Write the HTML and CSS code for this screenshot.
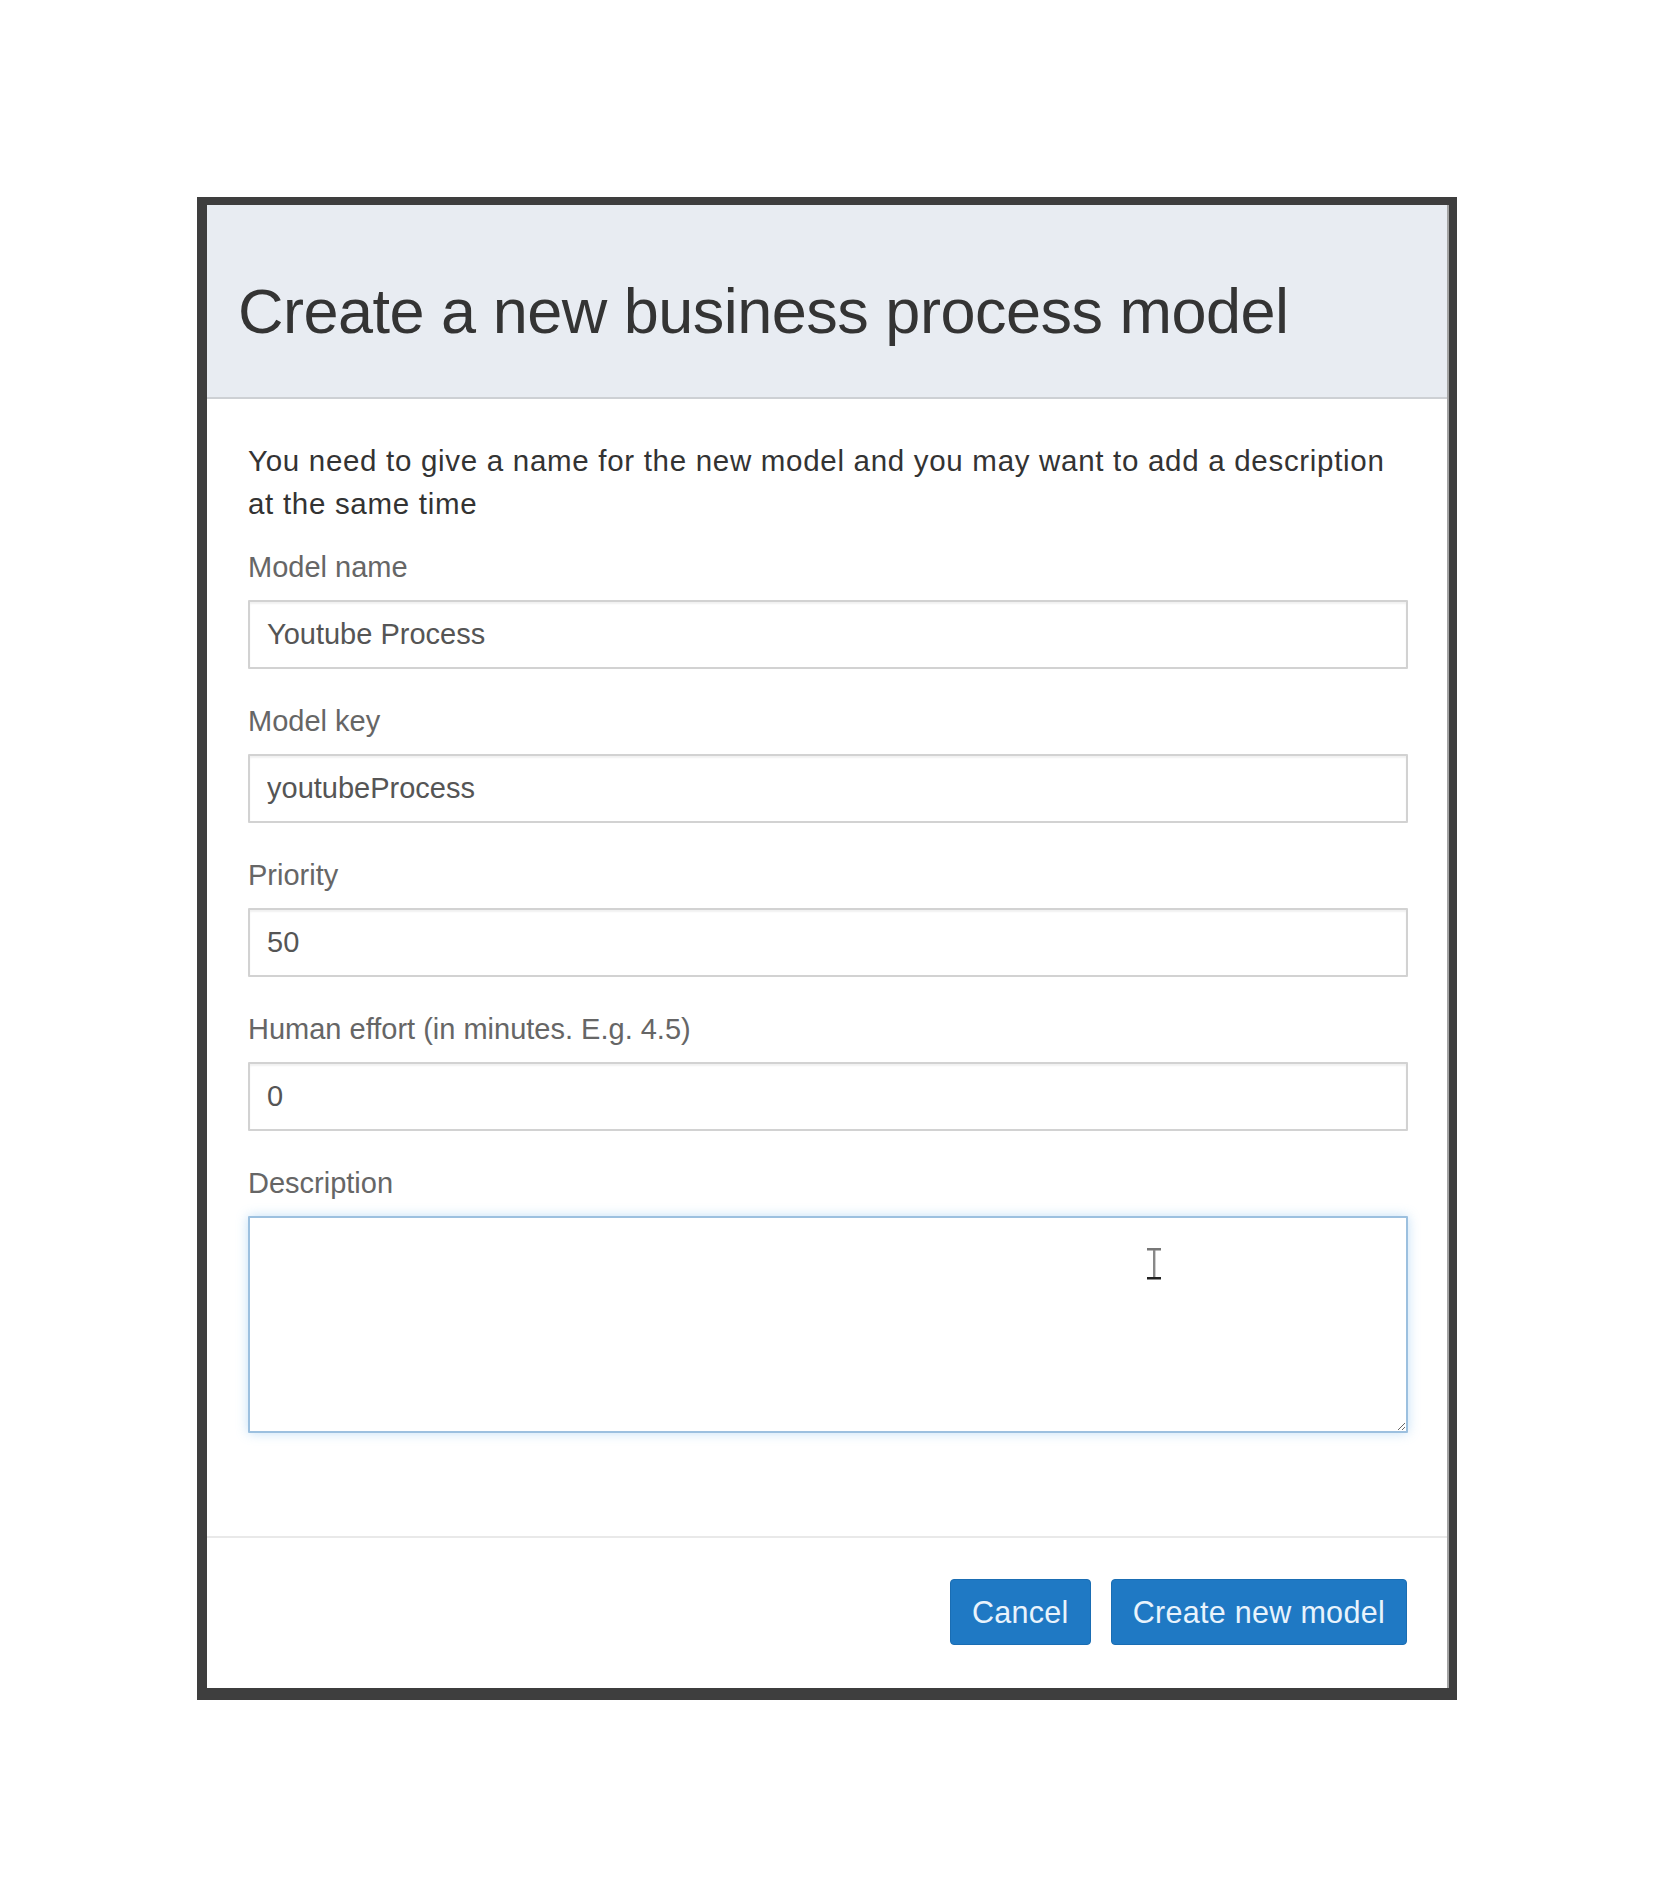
FILE: index.html
```html
<!DOCTYPE html>
<html>
<head>
<meta charset="utf-8">
<link rel="stylesheet" href="styles.css">
</head>
<body>
<div class="page">
  <div class="frame">
    <div class="modal">
      <div class="modal-header">
        <h1 class="modal-title">Create a new business process model</h1>
      </div>
      <div class="modal-body">
        <p class="intro">You need to give a name for the new model and you may want to add a description at the same time</p>
        <div class="form-group">
          <label class="label">Model name</label>
          <input class="input" type="text" value="Youtube Process">
        </div>
        <div class="form-group">
          <label class="label">Model key</label>
          <input class="input" type="text" value="youtubeProcess">
        </div>
        <div class="form-group">
          <label class="label">Priority</label>
          <input class="input" type="text" value="50">
        </div>
        <div class="form-group">
          <label class="label">Human effort (in minutes. E.g. 4.5)</label>
          <input class="input" type="text" value="0">
        </div>
        <div class="form-group">
          <label class="label">Description</label>
          <div class="textarea-wrap">
            <textarea class="textarea"></textarea>
            <svg class="ibeam" width="16" height="34" viewBox="0 0 16 34">
              <rect x="1" y="1" width="14" height="2.5" fill="#777"/>
              <rect x="7" y="3" width="2.4" height="27" fill="#888"/>
              <rect x="1" y="30" width="14" height="2.5" fill="#222"/>
            </svg>
          </div>
        </div>
      </div>
      <div class="modal-footer">
        <button class="btn">Cancel</button>
        <button class="btn">Create new model</button>
      </div>
    </div>
  </div>
</div>
</body>
</html>
```
FILE: styles.css
```css
html, body {
  margin: 0;
  padding: 0;
  background: #ffffff;
}
body {
  font-family: "Liberation Sans", Arial, Helvetica, sans-serif;
  color: #333;
}
.page {
  padding: 197px 0 0 197px;
}
.frame {
  width: 1260px;
  box-sizing: border-box;
  border-style: solid;
  border-color: #3e3e3e;
  border-width: 8px 8px 12px 10px;
  background: #fff;
}
.modal {
  border-right: 2px solid #a3a3a3;
}
.modal-header {
  height: 192px;
  background: #e8ecf2;
  border-bottom: 2px solid #cdd0d4;
  display: flex;
  align-items: center;
  padding-left: 31px;
}
.modal-title {
  margin: 0;
  font-weight: normal;
  font-size: 63px;
  line-height: 1;
  color: #343434;
  padding-top: 20px;
  letter-spacing: -0.5px;
}
.modal-body {
  padding: 40px 39px 72px 41px;
}
.intro {
  margin: 0 0 21px;
  font-size: 29.5px;
  line-height: 43px;
  color: #333;
  letter-spacing: 0.7px;
}
.form-group {
  margin-bottom: 31px;
}
.label {
  display: block;
  font-size: 29px;
  line-height: 43px;
  color: #666;
  margin-bottom: 11px;
}
.input {
  display: block;
  width: 100%;
  height: 69px;
  box-sizing: border-box;
  border: 2px solid #d2d2d2;
  border-radius: 1px;
  box-shadow: inset 0 2px 2px rgba(0,0,0,0.06);
  padding: 0 17px;
  font-family: "Liberation Sans", Arial, sans-serif;
  font-size: 29px;
  color: #555;
  background: #fff;
  outline: none;
}
.textarea-wrap {
  position: relative;
}
.textarea {
  display: block;
  width: 100%;
  height: 217px;
  box-sizing: border-box;
  border: 2px solid #9cc0df;
  border-radius: 1px;
  box-shadow: 0 0 12px rgba(102,175,233,0.4);
  font-family: "Liberation Sans", Arial, sans-serif;
  font-size: 29px;
  padding: 10px 17px;
  outline: none;
  resize: vertical;
}
.ibeam {
  position: absolute;
  left: 898px;
  top: 31px;
}
.modal-footer {
  border-top: 2px solid #e9e9e9;
  padding: 41px 40px 43px 0;
  display: flex;
  justify-content: flex-end;
  gap: 20px;
}
.btn {
  height: 66px;
  padding: 0 21px;
  border: 1px solid #1a6db3;
  border-radius: 4px;
  background: #1f79c4;
  color: #e8f3fc;
  font-family: "Liberation Sans", Arial, sans-serif;
  font-size: 30.5px;
  letter-spacing: 0.3px;
}
```
